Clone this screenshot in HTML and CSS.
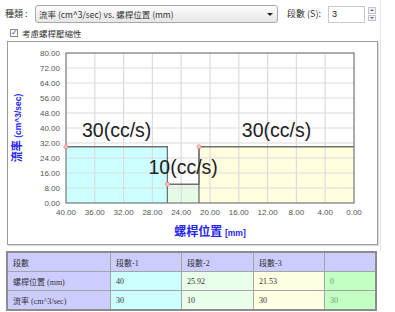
FILE: index.html
```html
<!DOCTYPE html>
<html lang="zh-Hant">
<head>
  <meta charset="UTF-8">
  <meta name="viewport" content="width=device-width, initial-scale=1.0">
  <title>段數設定</title>
  <link rel="stylesheet" href="styles.css">
</head>
<body>
  <div class="frame">
    <div class="toolbar">
      <span class="lbl">種類 :</span>
      <div class="combo">
        <span class="combo-text">流率 (cm^3/sec) vs. 螺桿位置 (mm)</span>
        <span class="arrow"></span>
      </div>
      <span class="lbl seg-lbl">段數 (S):</span>
      <div class="spin">3</div>
      <div class="spin-btns">
        <span class="up"></span>
        <span class="down"></span>
      </div>
    </div>

    <label class="check"><span class="box">&#10003;</span>考慮螺桿壓縮性</label>

    <div class="chart-panel">
      <svg id="chart" width="369" height="202" viewBox="8 42 369 202"></svg>
    </div>
  </div>

  <table class="seg-table">
    <tr>
      <td class="head">段數</td>
      <td class="head">段數-1</td>
      <td class="head">段數-2</td>
      <td class="head">段數-3</td>
      <td class="head"></td>
    </tr>
    <tr>
      <td class="head">螺桿位置 (mm)</td>
      <td class="c1">40</td>
      <td class="c2">25.92</td>
      <td class="c3">21.53</td>
      <td class="c4">0</td>
    </tr>
    <tr>
      <td class="head">流率 (cm^3/sec)</td>
      <td class="c1">30</td>
      <td class="c2">10</td>
      <td class="c3">30</td>
      <td class="c4">30</td>
    </tr>
  </table>

  <script>
    const svg = document.getElementById("chart");
    const ns = "http://www.w3.org/2000/svg";

    // plot area in page pixels
    const L = 66, T = 53, R = 354, B = 203;
    const xs = v => L + (40 - v) * (R - L) / 40;
    const ys = v => B - v * (B - T) / 80;

    const segments = [
      { from: 40, to: 25.92, rate: 30, fill: "#ccffff" },
      { from: 25.92, to: 21.53, rate: 10, fill: "#e6fbe6" },
      { from: 21.53, to: 0, rate: 30, fill: "#ffffe0" }
    ];

    function add(tag, attrs, text) {
      const el = document.createElementNS(ns, tag);
      for (const k in attrs) el.setAttribute(k, attrs[k]);
      if (text !== undefined) el.textContent = text;
      svg.appendChild(el);
      return el;
    }

    add("rect", { x: L, y: T, width: R - L, height: B - T, fill: "#fff" });

    segments.forEach(s => {
      add("rect", {
        x: xs(s.from), y: ys(s.rate),
        width: xs(s.to) - xs(s.from), height: B - ys(s.rate),
        fill: s.fill
      });
    });

    for (let k = 1; k < 10; k++) {
      const x = xs(40 - k * 4);
      add("line", { x1: x, y1: T, x2: x, y2: B, stroke: "#dcdcdc", "stroke-width": 1.2 });
      const y = ys(k * 8);
      add("line", { x1: L, y1: y, x2: R, y2: y, stroke: "#dcdcdc", "stroke-width": 1.2 });
    }

    add("rect", { x: L, y: T, width: R - L, height: B - T, fill: "none", stroke: "#808080", "stroke-width": 1.3 });

    // step outline
    let d = "";
    segments.forEach((s, i) => {
      d += (i === 0 ? "M" : "L") + xs(s.from) + " " + ys(s.rate) + " L" + xs(s.to) + " " + ys(s.rate) + " ";
    });
    add("path", { d: d, fill: "none", stroke: "#707070", "stroke-width": 1.3 });
    segments.forEach((s, i) => {
      if (i > 0) add("line", { x1: xs(s.from), y1: ys(s.rate), x2: xs(s.from), y2: B, stroke: "#707070", "stroke-width": 1.3 });
    });

    segments.forEach(s => {
      add("circle", { cx: xs(s.from), cy: ys(s.rate), r: 2, fill: "#ffc8c8", stroke: "#f08080", "stroke-width": 0.8 });
      add("text", {
        x: (xs(s.from) + xs(s.to)) / 2, y: ys(s.rate) - 10,
        "text-anchor": "middle", class: "rate-label"
      }, s.rate + "(cc/s)");
    });

    for (let v = 0; v <= 80; v += 8) {
      add("text", { x: 60, y: ys(v) + 3, "text-anchor": "end", class: "tick" }, v.toFixed(2));
    }
    for (let v = 0; v <= 40; v += 4) {
      add("text", { x: xs(v), y: 215, "text-anchor": "middle", class: "tick" }, v.toFixed(2));
    }

    const xt = add("text", { x: 210, y: 236, "text-anchor": "middle", class: "axis-title" });
    xt.innerHTML = '螺桿位置 <tspan class="unit">[mm]</tspan>';
    const yt = add("text", { x: 0, y: 0, "text-anchor": "middle", class: "axis-title y-title", transform: "translate(21 128) rotate(-90)" });
    yt.innerHTML = '流率 <tspan class="unit">(cm^3/sec)</tspan>';
  </script>
</body>
</html>
```

FILE: styles.css
```css
body {
  margin: 0;
  background: #fff;
  font-family: "Noto Sans CJK TC", "Liberation Sans", sans-serif;
  font-size: 9px;
  color: #333;
}

.frame {
  width: 380px;
  border-right: 1px solid #e2e2e2;
  padding-bottom: 6px;
}

.toolbar {
  display: flex;
  align-items: center;
  height: 18px;
  padding: 5px 0 0 5px;
}

.lbl {
  white-space: nowrap;
  line-height: 18px;
}

.toolbar > .lbl:first-child {
  width: 30px;
}

.combo {
  box-sizing: border-box;
  width: 243px;
  height: 18px;
  border: 1px solid #a8a8a8;
  border-radius: 3px;
  background: linear-gradient(#fdfdfd, #e6e6e6);
  display: flex;
  align-items: center;
  justify-content: space-between;
  padding: 0 4px 0 3px;
}

.combo-text {
  font-size: 8.5px;
  color: #333;
}

.arrow {
  width: 0;
  height: 0;
  border-left: 3px solid transparent;
  border-right: 3px solid transparent;
  border-top: 3px solid #222;
}

.seg-lbl {
  margin-left: 9px;
  width: 41px;
}

.spin {
  box-sizing: border-box;
  width: 37px;
  height: 17px;
  border: 1px solid #c8c8c8;
  background: #fff;
  padding-left: 3px;
  font-family: "Liberation Sans", sans-serif;
  font-size: 9px;
  line-height: 15px;
  color: #222;
}

.spin-btns {
  margin-left: 3px;
  width: 8px;
  height: 14px;
  display: flex;
  flex-direction: column;
  gap: 1px;
}

.spin-btns span {
  flex: 1;
  border: 1px solid #c4c4c4;
  background: #f2f2f2;
  position: relative;
}

.spin-btns .up::after,
.spin-btns .down::after {
  content: "";
  position: absolute;
  left: 1px;
  top: 1px;
  border-left: 2px solid transparent;
  border-right: 2px solid transparent;
}

.spin-btns .up::after {
  border-bottom: 2px solid #4a6fb0;
}

.spin-btns .down::after {
  border-top: 2px solid #4a6fb0;
}

.check {
  display: flex;
  align-items: center;
  gap: 4px;
  height: 10px;
  margin: 5px 0 0 10px;
  font-size: 8.5px;
}

.box {
  box-sizing: border-box;
  width: 8px;
  height: 8px;
  border: 1px solid #8a8a8a;
  background: #fff;
  color: #2a4fc0;
  font-size: 8px;
  line-height: 6px;
  text-align: center;
  font-family: "DejaVu Sans", sans-serif;
}

.chart-panel {
  margin: 3px 0 0 7px;
  width: 369px;
  height: 202px;
  border: 1px solid #9c9c9c;
  box-shadow: 1px 1px 1px #ddd;
}

#chart {
  display: block;
  overflow: visible;
}

.tick {
  font-family: "Liberation Sans", sans-serif;
  font-size: 8px;
  fill: #555;
}

.rate-label {
  font-family: "Liberation Sans", sans-serif;
  font-size: 19.5px;
  fill: #222;
}

.axis-title {
  font-family: "Noto Sans CJK TC", sans-serif;
  font-size: 12px;
  font-weight: bold;
  fill: #2626f0;
}

.y-title {
  font-size: 11px;
}

.axis-title .unit {
  font-family: "Liberation Sans", sans-serif;
  font-size: 8.5px;
}

.seg-table {
  margin: 0 0 0 6px;
  width: 371px;
  border-collapse: collapse;
  border: 2px solid #8c8c8c;
  font-size: 8px;
  color: #333;
}

.seg-table td {
  border: 1px solid #a4a4a4;
  height: 18px;
  padding: 0 0 0 5px;
  vertical-align: middle;
  font-family: "Liberation Serif", "Noto Sans CJK TC", serif;
}

.seg-table td:nth-child(1) { width: 97px; }
.seg-table td:nth-child(2) { width: 65px; }
.seg-table td:nth-child(3) { width: 66px; }
.seg-table td:nth-child(4) { width: 65px; }

.head { background: #ccccff; }
.c1 { background: #ccffff; }
.c2 { background: #eaffea; }
.c3 { background: #ffffe4; }
.c4 { background: #c2ffc2; color: #7a9a7a; }
```
